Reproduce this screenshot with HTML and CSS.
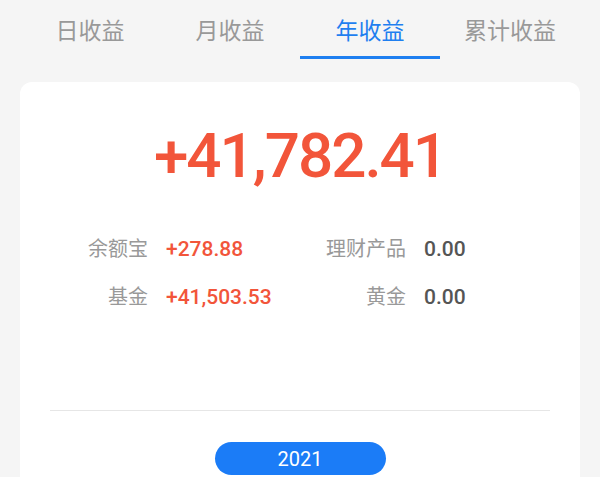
FILE: index.html
```html
<!DOCTYPE html>
<html lang="zh-CN">
<head>
    <meta charset="UTF-8">
    <meta name="viewport" content="width=device-width, initial-scale=1.0">
    <title>收益</title>
    <link rel="stylesheet" href="styles.css">
</head>
<body>
    <div class="tabs">
        <div class="tab">日收益</div>
        <div class="tab">月收益</div>
        <div class="tab active">年收益</div>
        <div class="tab">累计收益</div>
    </div>

    <div class="card">
        <div class="total">+41,782.41</div>
        <div class="stats">
            <div class="label">余额宝</div>
            <div class="value up">+278.88</div>
            <div class="label">理财产品</div>
            <div class="value">0.00</div>
            <div class="label">基金</div>
            <div class="value up">+41,503.53</div>
            <div class="label">黄金</div>
            <div class="value">0.00</div>
        </div>
        <div class="divider"></div>
        <div class="year-row">
            <button type="button" class="year-btn">2021</button>
        </div>
    </div>
</body>
</html>
```

FILE: styles.css
```css
body {
    margin: 0;
    background-color: #f5f5f5;
    font-family: Roboto, "Noto Sans CJK SC", sans-serif;
}
.tabs {
    display: flex;
    padding: 0 20px;
}
.tab {
    flex: 1;
    text-align: center;
    font-size: 23px;
    color: #999;
    padding-top: 7px;
    line-height: 49px;
    border-bottom: 3px solid transparent;
}
.tab.active {
    color: #1f7ff0;
    border-bottom-color: #1f7ff0;
}
.card {
    margin: 23px 20px 0;
    background: #fff;
    border-radius: 12px;
    padding: 44px 0 20px;
}
.total {
    text-align: center;
    font-size: 62px;
    font-weight: 500;
    letter-spacing: -2px;
    line-height: 60px;
    color: #f2553a;
}
.stats {
    display: grid;
    grid-template-columns: 128px 110px 112px 1fr;
    column-gap: 18px;
    margin-top: 39px;
    font-size: 20px;
    line-height: 48px;
}
.label {
    text-align: right;
    color: #999;
}
.value {
    color: #555;
    font-size: 21px;
    font-weight: 500;
}
.value.up {
    color: #f2553a;
}
.divider {
    height: 1px;
    background: #e6e6e6;
    margin: 89px 30px 0;
}
.year-row {
    display: flex;
    justify-content: center;
    margin-top: 31px;
}
.year-btn {
    width: 171px;
    height: 33px;
    border: none;
    border-radius: 17px;
    background-color: #1b7cf7;
    color: #fff;
    font-family: Roboto, sans-serif;
    font-size: 20px;
    padding: 0;
}
```
